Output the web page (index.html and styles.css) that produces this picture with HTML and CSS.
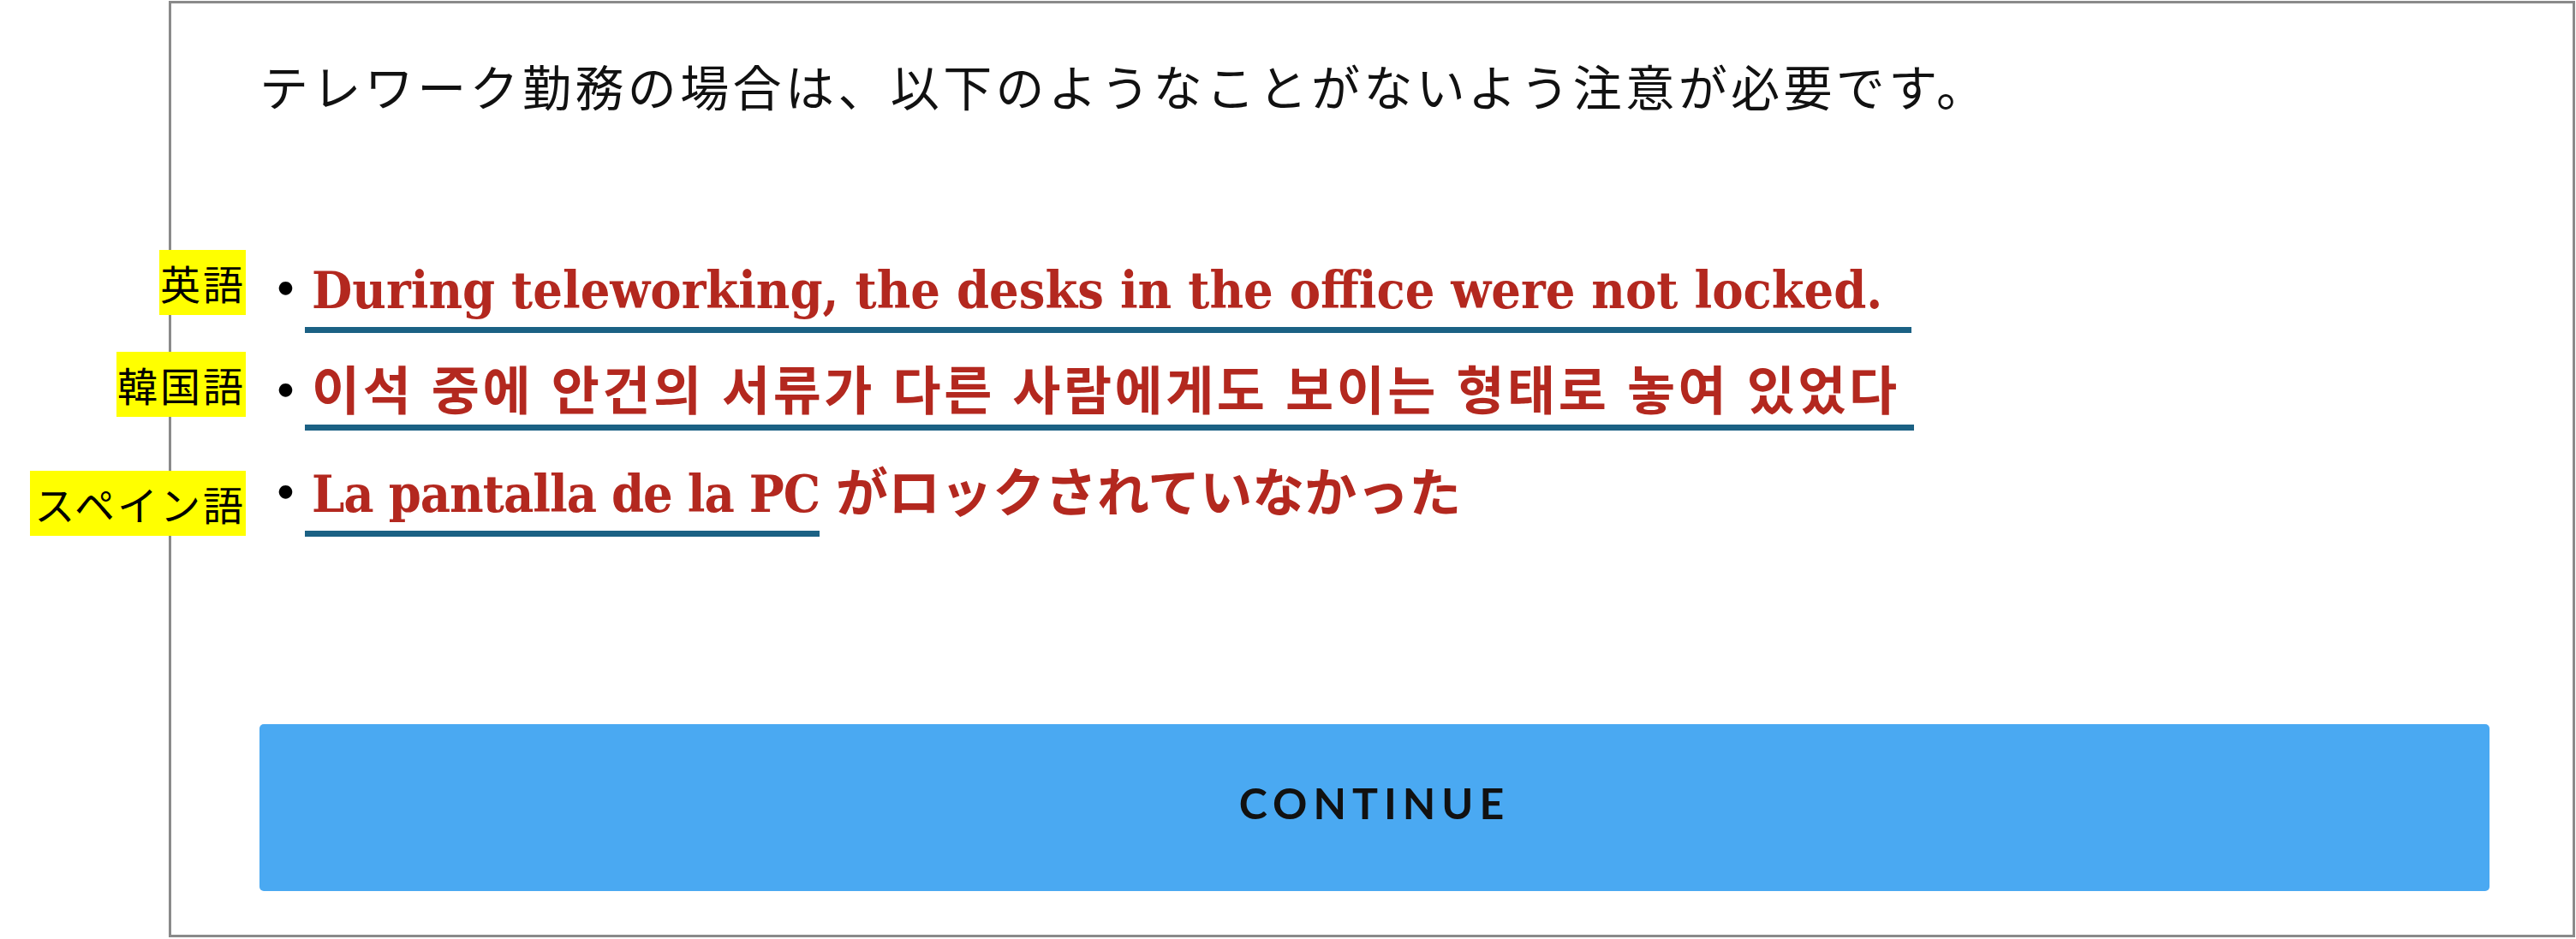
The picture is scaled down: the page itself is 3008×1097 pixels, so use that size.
FILE: index.html
```html
<!DOCTYPE html>
<html lang="ja">
<head>
    <meta charset="UTF-8">
    <title>テレワーク勤務の注意</title>
    <link rel="stylesheet" href="styles.css">
</head>
<body>
    <div class="frame">
        <p class="lead">テレワーク勤務の場合は、以下のようなことがないよう注意が必要です。</p>
        <ul class="cases">
            <li class="case"><span class="tag">英語</span><span class="dot">・</span><span class="mark mark-en" lang="en">During teleworking, the desks in the office were not locked.</span></li>
            <li class="case"><span class="tag">韓国語</span><span class="dot">・</span><span class="mark mark-ko" lang="ko">이석 중에 안건의 서류가 다른 사람에게도 보이는 형태로 놓여 있었다</span></li>
            <li class="case"><span class="tag tag-low">スペイン語</span><span class="dot">・</span><span class="mark mark-es" lang="es">La pantalla de la PC</span> <span class="ja">がロックされていなかった</span></li>
        </ul>
        <button type="button" class="continue">CONTINUE</button>
    </div>
</body>
</html>
```

FILE: styles.css
```css
body { margin: 0; font-family: "Noto Sans CJK JP", sans-serif; color: #111; background-color: #fff; }
.frame { display: flex; flex-direction: column; box-sizing: border-box; height: 1094px; margin: 1px 1px 0 197px; padding: 55px 97px 51px 103px; border: 3px solid #8a8a8a; }
.lead { margin: 0; font-size: 57px; letter-spacing: 4.4px; line-height: 80px; }
.cases { margin: 155px 0 0; padding: 0; list-style: none; }
.case { position: relative; height: 119px; font-family: "DejaVu Serif Condensed", "DejaVu Serif", serif; font-size: 60.6px; font-weight: bold; line-height: 80px; color: #b3281f; white-space: nowrap; }
.tag { position: absolute; right: calc(100% + 16px); top: -2px; padding-left: 1px; font-family: "Noto Sans CJK JP", sans-serif; font-size: 47px; font-weight: normal; letter-spacing: 3px; line-height: 76px; color: #000; background-color: #ff0; }
.tag-low { top: 18px; padding-left: 5px; }
.dot { font-family: "Noto Sans CJK JP", sans-serif; font-size: 61px; font-weight: bold; color: #000; }
.mark { display: inline-block; margin-left: -8px; padding: 0 0 3px 8px; border-bottom: 7px solid #1b6184; }
.mark-en { padding-right: 34px; }
.mark-ko { padding-right: 16px; font-family: "Noto Sans CJK KR", sans-serif; font-size: 61px; letter-spacing: 3.5px; }
.mark-es { letter-spacing: -1px; }
.ja { font-family: "Noto Sans CJK JP", sans-serif; font-size: 61px; }
.continue { display: block; width: 100%; height: 195px; margin-top: auto; padding: 0 0 12px; font-family: Lato, sans-serif; font-size: 50px; font-weight: bold; letter-spacing: 7px; color: #111; background-color: #4aa9f2; border: none; border-radius: 5px; }
```
